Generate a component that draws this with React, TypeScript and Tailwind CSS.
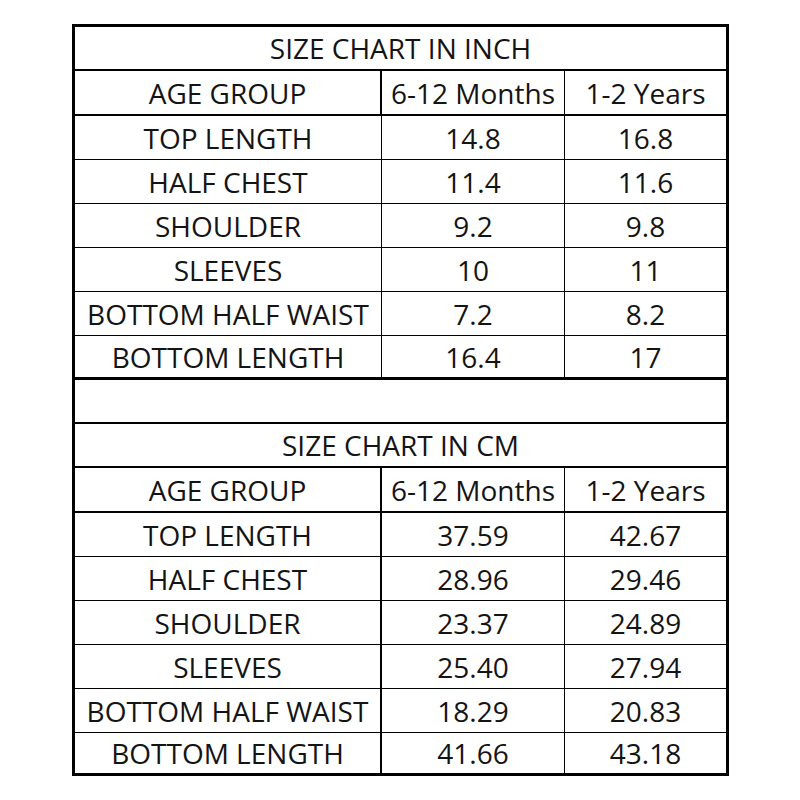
const inch = [
  ['TOP LENGTH', '14.8', '16.8'],
  ['HALF CHEST', '11.4', '11.6'],
  ['SHOULDER', '9.2', '9.8'],
  ['SLEEVES', '10', '11'],
  ['BOTTOM HALF WAIST', '7.2', '8.2'],
  ['BOTTOM LENGTH', '16.4', '17'],
]

const cm = [
  ['TOP LENGTH', '37.59', '42.67'],
  ['HALF CHEST', '28.96', '29.46'],
  ['SHOULDER', '23.37', '24.89'],
  ['SLEEVES', '25.40', '27.94'],
  ['BOTTOM HALF WAIST', '18.29', '20.83'],
  ['BOTTOM LENGTH', '41.66', '43.18'],
]

function TitleRow({ text }: { text: string }) {
  return (
    <div className="flex h-[44px] items-center justify-center border-b-2 border-black">
      {text}
    </div>
  )
}

function AgeRow() {
  return (
    <div className="grid h-[45px] grid-cols-[307px_183px_1fr] border-b-2 border-black">
      <div className="flex items-center justify-center border-r-2 border-black">AGE GROUP</div>
      <div className="flex items-center justify-center border-r border-black">6-12 Months</div>
      <div className="flex items-center justify-center">1-2 Years</div>
    </div>
  )
}

function DataRows({ rows, thick, last }: { rows: string[][]; thick?: boolean; last?: boolean }) {
  return (
    <>
      {rows.map((r, i) => {
        const isLast = i === rows.length - 1
        return (
          <div
            key={r[0]}
            className={
              'grid grid-cols-[307px_183px_1fr] border-black ' +
              (isLast ? (last ? 'h-[40px]' : 'h-[44px] border-b-[3px]') : 'h-[44px] border-b')
            }
          >
            <div
              className={
                'flex items-center justify-center border-black ' + (thick ? 'border-r-2' : 'border-r')
              }
            >
              {r[0]}
            </div>
            <div className="flex items-center justify-center border-r border-black">{r[1]}</div>
            <div className="flex items-center justify-center">{r[2]}</div>
          </div>
        )
      })}
    </>
  )
}

export default function App() {
  return (
    <div className="h-[800px] w-[800px] bg-white pl-[72px] pt-[24px]">
      <div
        className="w-[657px] border-[3px] border-black text-[28px] leading-none text-[#141414]"
        style={{ fontFamily: '"Open Sans", sans-serif' }}
      >
        <TitleRow text="SIZE CHART IN INCH" />
        <AgeRow />
        <DataRows rows={inch} />
        <div className="h-[44px] border-b-2 border-black" />
        <TitleRow text="SIZE CHART IN CM" />
        <AgeRow />
        <DataRows rows={cm} thick last />
      </div>
    </div>
  )
}
